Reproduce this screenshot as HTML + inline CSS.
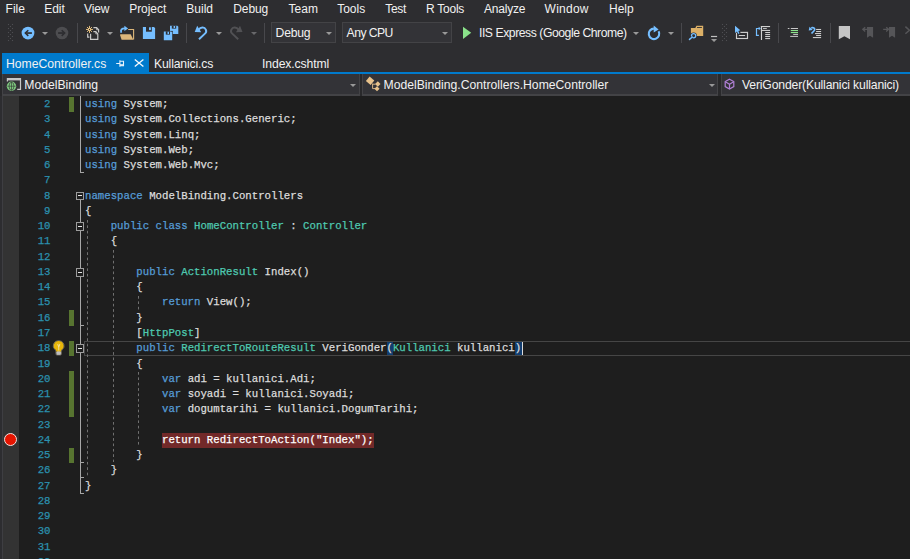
<!DOCTYPE html>
<html lang="en">
<head>
<meta charset="utf-8">
<title>ModelBinding - Microsoft Visual Studio</title>
<style>
*{box-sizing:border-box;margin:0;padding:0}
html,body{width:910px;height:559px;overflow:hidden;background:#2d2d30}
body{position:relative;font-family:"Liberation Sans",sans-serif;font-size:12px;color:#f1f1f1}
.abs{position:absolute}
/* menu */
#menu{position:absolute;left:0;top:0;width:910px;height:20px;background:#2d2d30}
#menu span{position:absolute;top:1px;line-height:16px;font-size:12px;color:#f1f1f1;white-space:nowrap}
/* toolbar */
#tb{position:absolute;left:0;top:20px;width:910px;height:28px;background:#2d2d30}
.sep{position:absolute;top:3px;width:1.2px;height:20px;background:#48484c}
.dd{position:absolute;width:0;height:0;border-left:3px solid transparent;border-right:3px solid transparent;border-top:3px solid #999}
.dd.dis{border-top-color:#68686b}
.combo{position:absolute;top:2px;height:21px;background:#333337;border:1px solid #434346}
.combo span{position:absolute;left:3.6px;top:3px;line-height:15px;font-size:12.2px;white-space:nowrap}
.tbt{position:absolute;font-size:12.2px;line-height:15px;white-space:nowrap}
.grip{position:absolute;width:5px;height:17px;background-image:radial-gradient(circle,#46464a 0.6px,transparent 0.8px);background-size:2.5px 2.5px}
svg{position:absolute;overflow:visible}
/* tabs */
#tabs{position:absolute;left:0;top:48px;width:910px;height:24px;background:#2d2d30}
#tabline{position:absolute;left:2px;top:72px;width:908px;height:2px;background:#007acc}
#tabact{position:absolute;left:2px;top:53px;width:147px;height:19px;background:#007acc}
.tab{position:absolute;top:56px;font-size:12.2px;line-height:16px;white-space:nowrap;color:#f1f1f1}
/* nav */
#nav{position:absolute;left:0;top:74px;width:910px;height:22px;background:#29292b}
.nc{position:absolute;top:0;height:21.7px;background:#333337;border:1.3px solid #434346;border-top:0;border-bottom-width:2px}
.nt{position:absolute;top:77px;font-size:12.2px;line-height:16px;white-space:nowrap;color:#f1f1f1}
/* editor */
#ed{position:absolute;left:0;top:96px;border-top:0;width:910px;height:463px;background:#1e1e1e;overflow:hidden}
#mg{position:absolute;left:0;top:0;width:18.5px;height:463px;background:#333333;border-left:2px solid #2d2d30}
#mg:after{content:"";position:absolute;left:0;top:0;width:1px;height:463px;background:#3e3e42}
.ln,.cl{position:absolute;margin-top:0.4px;-webkit-text-stroke:0.25px;font-family:"Liberation Mono",monospace;font-size:10.7px;line-height:15.26px;height:15.26px;white-space:pre;top:calc((var(--n) - 2) * 15.26px + 0.7px)}
.ln{left:20px;width:30.5px;text-align:right;color:#2b91af}
.cl{left:85px;color:#dcdcdc}
.k{color:#569cd6}.t{color:#4ec9b0}.s{color:#d69d85}
.gb{position:absolute;left:69px;width:4.6px;background:#577430;top:calc((var(--n) - 2) * 15.26px + 0.7px);height:calc(var(--c) * 15.26px)}
.vl{position:absolute;width:1.2px;background:#a8a8a8}
.ft{position:absolute;height:1px;width:4px;left:80px;background:#a5a5a5}
.ob{position:absolute;left:76px;width:8.1px;height:8.7px;border:1px solid #9c9c9c;background:#1e1e1e;top:calc((var(--n) - 2) * 15.26px + 0.7px + 3.3px)}
.ob:after{content:"";position:absolute;left:1px;top:2.8px;width:4.1px;height:1.1px;background:#e6e6e6}
.curl{position:absolute;left:84px;right:-2px;top:calc((var(--n) - 2) * 15.26px + 0.7px - 0.1px);height:15.2px;border:1.4px solid #464646}
.bp{color:#fff}
.hbx{position:absolute;background:#113d6f;width:6.42px;height:12.4px}
.bpx{position:absolute;background:#722929;left:162px;width:212.3px;height:15px}
.caret{position:absolute;width:1px;background:#dcdcdc;height:13px}
.bpg{position:absolute;left:4.1px;width:13.1px;height:13.1px;border-radius:50%;background:#e51400;border:1px solid #f5e1de}
.ig{position:absolute;width:1px;background-image:linear-gradient(#707070 52%,transparent 52%);background-size:1px 5.39px}
</style>
</head>
<body>
<div id="menu">
<span style="left:5.6px">File</span><span style="left:44.2px">Edit</span><span style="left:84px;letter-spacing:-0.15px">View</span><span style="left:129.2px;letter-spacing:-0.05px">Project</span><span style="left:186.3px">Build</span><span style="left:233.3px;letter-spacing:-0.1px">Debug</span><span style="left:288.6px">Team</span><span style="left:337.2px">Tools</span><span style="left:385.2px;letter-spacing:-0.3px">Test</span><span style="left:426px;letter-spacing:-0.25px">R Tools</span><span style="left:484px;letter-spacing:-0.2px">Analyze</span><span style="left:544.6px;letter-spacing:0.25px">Window</span><span style="left:609px">Help</span>
</div>
<div id="tb">
<div class="sep" style="left:77px"></div>
<div class="sep" style="left:186px"></div>
<div class="sep" style="left:264px"></div>
<div class="sep" style="left:681px"></div>
<div class="sep" style="left:778px"></div>
<div class="sep" style="left:830px"></div>
<div class="dd" style="left:42px;top:12px"></div>
<div class="dd" style="left:107px;top:12px"></div>
<div class="dd" style="left:216px;top:12px"></div>
<div class="dd dis" style="left:251px;top:12px"></div>
<div class="dd" style="left:633px;top:12px"></div>
<div class="dd" style="left:668px;top:12px"></div>
<div class="combo" style="left:271px;width:65px"><span style="letter-spacing:-0.25px">Debug</span></div>
<div class="dd" style="left:326px;top:12px"></div>
<div class="combo" style="left:342px;width:110px"><span style="letter-spacing:-0.55px">Any CPU</span></div>
<div class="dd" style="left:442px;top:12px"></div>
<div class="tbt" style="left:479px;top:6px;letter-spacing:-0.45px">IIS Express (Google Chrome)</div>
<svg style="left:0;top:0" width="910" height="28" viewBox="0 20 910 28">
<!-- grips -->
<g fill="#4e4e52"><rect x="7.95" y="23.95" width="1.1" height="1.1"/><rect x="11.95" y="23.95" width="1.1" height="1.1"/><rect x="9.90" y="25.95" width="1.1" height="1.1"/><rect x="7.95" y="27.95" width="1.1" height="1.1"/><rect x="11.95" y="27.95" width="1.1" height="1.1"/><rect x="9.90" y="29.95" width="1.1" height="1.1"/><rect x="7.95" y="31.95" width="1.1" height="1.1"/><rect x="11.95" y="31.95" width="1.1" height="1.1"/><rect x="9.90" y="33.95" width="1.1" height="1.1"/><rect x="7.95" y="35.95" width="1.1" height="1.1"/><rect x="11.95" y="35.95" width="1.1" height="1.1"/><rect x="9.90" y="37.95" width="1.1" height="1.1"/><rect x="7.95" y="39.95" width="1.1" height="1.1"/><rect x="11.95" y="39.95" width="1.1" height="1.1"/><rect x="721.95" y="23.95" width="1.1" height="1.1"/><rect x="725.95" y="23.95" width="1.1" height="1.1"/><rect x="723.90" y="25.95" width="1.1" height="1.1"/><rect x="721.95" y="27.95" width="1.1" height="1.1"/><rect x="725.95" y="27.95" width="1.1" height="1.1"/><rect x="723.90" y="29.95" width="1.1" height="1.1"/><rect x="721.95" y="31.95" width="1.1" height="1.1"/><rect x="725.95" y="31.95" width="1.1" height="1.1"/><rect x="723.90" y="33.95" width="1.1" height="1.1"/><rect x="721.95" y="35.95" width="1.1" height="1.1"/><rect x="725.95" y="35.95" width="1.1" height="1.1"/><rect x="723.90" y="37.95" width="1.1" height="1.1"/><rect x="721.95" y="39.95" width="1.1" height="1.1"/><rect x="725.95" y="39.95" width="1.1" height="1.1"/></g>
<!-- back -->
<circle cx="28" cy="33.050" r="6.400" fill="#75beff"/>
<path d="M31.900 33.050H26.200" stroke="#2d2d30" stroke-width="1.700" fill="none"/>
<path d="M28.300 30.200L25.300 33.050L28.300 35.900" stroke="#2d2d30" stroke-width="1.500" fill="none"/>
<!-- forward (disabled) -->
<circle cx="62" cy="33.050" r="6.300" fill="#4d4d50"/>
<path d="M58.100 33.050H63.800" stroke="#2d2d30" stroke-width="1.700" fill="none"/>
<path d="M61.700 30.200L64.700 33.050L61.700 35.900" stroke="#2d2d30" stroke-width="1.500" fill="none"/>
<!-- new project -->
<g fill="none" stroke="#c8c8c8" stroke-width="1.2">
<path d="M93.4 27.7H96.6L98.6 29.8V32.6"/>
<path d="M87.7 33.4V37.2H89.4"/>
<path d="M93.4 31.7H95.8L97.8 33.9V39.3H90.6V33.8"/>
</g>
<path d="M95.8 31.7V33.9H97.8M96.6 27.7V29.8H98.6" fill="none" stroke="#c8c8c8" stroke-width="0.8"/>
<g stroke="#f5cc84" stroke-width="0.9">
<path d="M89.5 25.9V33M86 29.45H93M87 27L92 31.9M92 27L87 31.9"/>
</g>
<circle cx="89.5" cy="29.45" r="1.5" fill="#f5cc84"/>
<circle cx="89.5" cy="29.45" r="0.7" fill="#2d2d30"/>
<!-- open folder -->
<path d="M128.2 29.5H133.6V39.6" fill="none" stroke="#dcb67a" stroke-width="1.1"/>
<path d="M120.2 34.3H130.6L133.4 39.7H121.6L120.2 35.6Z" fill="#dcb67a"/>
<path d="M121.3 32.8C120.2 29.8 121.8 28.3 125 28.4" fill="none" stroke="#75beff" stroke-width="1.8"/>
<path d="M124.4 25.7L128.1 28.4L124.4 31.1Z" fill="#75beff"/>
<!-- save -->
<path d="M142.900 26.900H153.900L155.100 28.100V39.100H142.900Z" fill="#75beff"/>
<rect x="146" y="26.700" width="5.800" height="5" fill="#2d2d30"/>
<rect x="149" y="27.300" width="1.900" height="2.800" fill="#75beff"/>
<!-- save all -->
<path d="M170 25.800H177.400L178.300 26.700V34H170Z" fill="#75beff"/>
<rect x="171.800" y="25.600" width="4.400" height="3" fill="#2d2d30"/>
<rect x="173.600" y="26" width="1.500" height="2" fill="#75beff"/>
<path d="M163.200 30.900H172.800V40.600H163.200Z" fill="#2d2d30"/>
<path d="M163.800 31.500H171.300L172.200 32.400V40.200H163.800Z" fill="#75beff"/>
<rect x="165.800" y="31.300" width="4.200" height="3.300" fill="#2d2d30"/>
<rect x="167.500" y="31.800" width="1.500" height="2.200" fill="#75beff"/>
<!-- undo -->
<path d="M199 39.2L205.2 33.4C207.4 31.2 205.6 27.4 202.4 27.6C200.6 27.7 199.4 28.6 198.4 29.8" fill="none" stroke="#75beff" stroke-width="2"/>
<path d="M194.7 32L197.2 25.8L201.2 32.2Z" fill="#75beff"/>
<!-- redo disabled -->
<path d="M238.2 39.2L232 33.4C229.8 31.2 231.6 27.4 234.8 27.6C236.6 27.7 237.8 28.6 238.8 29.8" fill="none" stroke="#515154" stroke-width="2"/>
<path d="M242.5 32L240 25.8L236 32.2Z" fill="#515154"/>
<!-- play -->
<path d="M463 26.7L471.2 32.8L463 38.9Z" fill="#8ae28a"/>
<!-- refresh -->
<path d="M658.600 31.300A5.250 5.250 0 1 1 653.900 28.600" fill="none" stroke="#75beff" stroke-width="2.100"/>
<path d="M653.700 25.500L658.600 29.400L653.700 32.400Z" fill="#75beff"/>
<!-- find in files -->
<path d="M690.900 28.100H695.300L696.500 25.800H703.200V35.900H690.900Z" fill="#dcb067"/>
<path d="M697 27.500H701.900" stroke="#2d2d30" stroke-width="0.900"/>
<circle cx="693.600" cy="35.700" r="3.300" fill="#2d2d30"/>
<circle cx="693.600" cy="35.700" r="2.100" fill="#2d2d30" stroke="#75beff" stroke-width="1.300"/>
<path d="M692 37.300L689.300 39.600" stroke="#2d2d30" stroke-width="2.600"/>
<path d="M692 37.300L689.500 39.400" stroke="#75beff" stroke-width="1.500" stroke-linecap="round"/>
<!-- overflow -->
<rect x="711" y="35.900" width="6.100" height="1.200" fill="#c0c0c0"/>
<path d="M711 39.100H717.100L714.050 42.100Z" fill="#999"/>
<!-- cursor + rect -->
<rect x="736.500" y="32.400" width="11" height="6.100" fill="none" stroke="#cfcfcf" stroke-width="1.150"/>
<rect x="738.800" y="35" width="6.300" height="1.050" fill="#cfcfcf"/>
<path d="M734.300 24.600V34.200L736.900 32.400L738.300 35L741 33.400L739.800 31.400L741.600 30.600Z" fill="#2d2d30"/>
<path d="M735 25.800V33L736.900 31.500L738.300 33.900L739.500 33.200L738.300 31L740.300 30.300Z" fill="#75beff"/>
<!-- bracket list -->
<path d="M759.600 28.500H756.500V35.400H758.900" fill="none" stroke="#75beff" stroke-width="1.200"/>
<path d="M758.700 26.800L760.900 28.500L758.700 30.200Z" fill="#75beff"/>
<g fill="#d0d0d0">
<rect x="760.900" y="26" width="1.150" height="14"/>
<rect x="760.900" y="26" width="9.200" height="1.100"/>
<rect x="763" y="28" width="3.800" height="1" fill="#b8b8b8"/>
<rect x="760.900" y="29.900" width="9.200" height="1.050"/>
<rect x="765.200" y="32" width="4.900" height="1.050"/>
<rect x="765.200" y="34.050" width="4.900" height="1.050"/>
<rect x="765.200" y="36" width="4.900" height="1.050"/>
<rect x="765.200" y="38.050" width="4.900" height="1.050"/>
</g>
<!-- comment lines -->
<g fill="#c8c8c8">
<rect x="787.8" y="28" width="1.6" height="1"/>
<rect x="790.8" y="28" width="7.2" height="1"/>
<rect x="793.2" y="33.9" width="4.8" height="1"/>
<rect x="790.2" y="35.9" width="7.8" height="1"/>
</g>
<rect x="790.8" y="30" width="7.2" height="1.1" fill="#8ae28a"/>
<rect x="790.8" y="32" width="7.2" height="1.1" fill="#8ae28a"/>
<!-- uncomment -->
<path d="M811.500 33.500L813.900 31C815.500 29.400 814.500 27.500 812.500 27.600L811.200 27.800" fill="none" stroke="#75beff" stroke-width="1.700"/>
<path d="M808.700 30.400L809.500 26.700L812.700 29.900Z" fill="#75beff"/>
<g fill="#d0d0d0">
<rect x="816.100" y="28.950" width="5" height="1.050"/>
<rect x="816.100" y="31" width="5" height="1.050"/>
<rect x="815" y="33.050" width="6.100" height="1.050"/>
<rect x="816.100" y="35" width="5" height="1.050"/>
<rect x="812.900" y="37.050" width="8.200" height="1.050"/>
</g>
<!-- bookmark -->
<path d="M838.8 26.1H850V39.2L844.4 36.2L838.8 39.2Z" fill="#c5c5c5"/>
<!-- prev bookmark -->
<path d="M867 27H873.1V37.8L870 35.8L867 37.8Z" fill="#555558"/>
<path d="M868 29.3H863M865.2 27.2L862.8 29.3L865.2 31.4" fill="none" stroke="#555558" stroke-width="1.3"/>
<!-- next bookmark -->
<path d="M889 27H895.1V37.8L892 35.8L889 37.8Z" fill="#555558"/>
<path d="M883.2 29.3H888.4M886.2 27.2L888.6 29.3L886.2 31.4" fill="none" stroke="#555558" stroke-width="1.3"/>
<path d="M905.4 26.6L909.4 30.2L905.4 33.8" fill="none" stroke="#555558" stroke-width="1.5"/>
</svg>

</div>
<div id="tabs"></div>
<div id="tabact"></div>
<div id="tabline"></div>
<div class="tab" style="left:6px">HomeController.cs</div>
<div class="tab" style="left:154px;letter-spacing:-0.15px">Kullanici.cs</div>
<div class="tab" style="left:262px;letter-spacing:-0.1px">Index.cshtml</div>
<svg style="left:0;top:48px" width="910" height="26" viewBox="0 48 910 26">
<g stroke="#e8f2fb" fill="none" stroke-width="1.1">
<path d="M116.2 63.5H119.8M119.9 60.2V66.8M120 61.3H123.5V65.7H120"/>
<path d="M120 65H123.5" stroke-width="1.6"/>
</g>
<path d="M134.8 59.6L143.4 66.6M143.4 59.6L134.8 66.6" stroke="#f4f9fd" stroke-width="1.35" fill="none"/>
</svg>

<div id="nav">
<div class="nc" style="left:2px;width:357.5px"></div>
<div class="nc" style="left:362px;width:356px"></div>
<div class="nc" style="left:721px;width:189px;border-right:0"></div>
<div class="dd" style="left:350px;top:10.2px"></div>
<div class="dd" style="left:709px;top:10.2px"></div>
</div>
<div class="nt" style="left:24.3px">ModelBinding</div>
<div class="nt" style="left:383.5px">ModelBinding.Controllers.HomeController</div>
<div class="nt" style="left:742px;letter-spacing:-0.16px">VeriGonder(Kullanici kullanici)</div>
<svg style="left:0;top:74px" width="910" height="22" viewBox="0 74 910 22">
<!-- web project -->
<path d="M7.4 81.4V78.6H20.5V89.4H17.2" fill="none" stroke="#c8c8c8" stroke-width="1.2"/>
<rect x="7" y="78" width="14" height="2.4" fill="#c8c8c8"/>
<circle cx="11.5" cy="86.2" r="4.7" fill="#7ec87e"/>
<g stroke="#2d2d30" stroke-width="0.6" fill="none">
<path d="M11.5 82V90.4M7.4 86.2H15.6"/>
<ellipse cx="11.5" cy="86.2" rx="2.4" ry="4"/>
</g>
<!-- class icon -->
<g fill="#e8c28b">
<path d="M369.600 76.600L374.300 80.600L370.600 85L365.900 81Z"/>
<path d="M377.800 81.200L380.500 84L377.800 86.800L375.100 84Z"/>
<path d="M377 86.200L379.600 88.700L377 91.200L374.400 88.700Z"/>
</g>
<path d="M372.600 83.600V88.600H375M372.600 84.200H375.600" fill="none" stroke="#e8c28b" stroke-width="0.9"/>
<!-- method cube -->
<g fill="none" stroke="#b180d7" stroke-width="1.2">
<path d="M729.5 79.2L733.8 81.6V86.6L729.5 89L725.2 86.6V81.6Z"/>
<path d="M725.4 81.8L729.5 84.2L733.6 81.8M729.5 84.2V88.8"/>
</g>
</svg>

<div id="ed">
<div id="mg"></div>
<div class="curl" style="--n:18"></div>
<div class="hbx" style="left:386.7px;top:246.26px"></div>
<div class="hbx" style="left:515.1px;top:246.26px"></div>
<div class="caret" style="left:522px;top:246.06px"></div>
<div class="bpx" style="top:336.82px"></div>
<div class="ln" style="--n:2">2</div>
<div class="cl" style="--n:2"><span class="k">using</span> System;</div>
<div class="ln" style="--n:3">3</div>
<div class="cl" style="--n:3"><span class="k">using</span> System.Collections.Generic;</div>
<div class="ln" style="--n:4">4</div>
<div class="cl" style="--n:4"><span class="k">using</span> System.Linq;</div>
<div class="ln" style="--n:5">5</div>
<div class="cl" style="--n:5"><span class="k">using</span> System.Web;</div>
<div class="ln" style="--n:6">6</div>
<div class="cl" style="--n:6"><span class="k">using</span> System.Web.Mvc;</div>
<div class="ln" style="--n:7">7</div>
<div class="ln" style="--n:8">8</div>
<div class="cl" style="--n:8"><span class="k">namespace</span> ModelBinding.Controllers</div>
<div class="ln" style="--n:9">9</div>
<div class="cl" style="--n:9">{</div>
<div class="ln" style="--n:10">10</div>
<div class="cl" style="--n:10">    <span class="k">public</span> <span class="k">class</span> <span class="t">HomeController</span> : <span class="t">Controller</span></div>
<div class="ln" style="--n:11">11</div>
<div class="cl" style="--n:11">    {</div>
<div class="ln" style="--n:12">12</div>
<div class="ln" style="--n:13">13</div>
<div class="cl" style="--n:13">        <span class="k">public</span> <span class="t">ActionResult</span> Index()</div>
<div class="ln" style="--n:14">14</div>
<div class="cl" style="--n:14">        {</div>
<div class="ln" style="--n:15">15</div>
<div class="cl" style="--n:15">            <span class="k">return</span> View();</div>
<div class="ln" style="--n:16">16</div>
<div class="cl" style="--n:16">        }</div>
<div class="ln" style="--n:17">17</div>
<div class="cl" style="--n:17">        [<span class="t">HttpPost</span>]</div>
<div class="ln" style="--n:18">18</div>
<div class="cl" style="--n:18">        <span class="k">public</span> <span class="t">RedirectToRouteResult</span> VeriGonder<span class="hb">(</span><span class="t">Kullanici</span> kullanici<span class="hb">)</span></div>
<div class="ln" style="--n:19">19</div>
<div class="cl" style="--n:19">        {</div>
<div class="ln" style="--n:20">20</div>
<div class="cl" style="--n:20">            <span class="k">var</span> adi = kullanici.Adi;</div>
<div class="ln" style="--n:21">21</div>
<div class="cl" style="--n:21">            <span class="k">var</span> soyadi = kullanici.Soyadi;</div>
<div class="ln" style="--n:22">22</div>
<div class="cl" style="--n:22">            <span class="k">var</span> dogumtarihi = kullanici.DogumTarihi;</div>
<div class="ln" style="--n:23">23</div>
<div class="ln" style="--n:24">24</div>
<div class="cl" style="--n:24">            <span class="bp">return RedirectToAction("Index");</span></div>
<div class="ln" style="--n:25">25</div>
<div class="cl" style="--n:25">        }</div>
<div class="ln" style="--n:26">26</div>
<div class="cl" style="--n:26">    }</div>
<div class="ln" style="--n:27">27</div>
<div class="cl" style="--n:27">}</div>
<div class="ln" style="--n:28">28</div>
<div class="ln" style="--n:29">29</div>
<div class="ln" style="--n:30">30</div>
<div class="ln" style="--n:31">31</div>
<div class="ln" style="--n:32">32</div>
<div class="gb" style="--n:2;--c:1"></div>
<div class="gb" style="--n:16;--c:1"></div>
<div class="gb" style="--n:18;--c:1"></div>
<div class="gb" style="--n:20;--c:3"></div>
<div class="gb" style="--n:25;--c:1"></div>
<div class="vl" style="left:79.9px;top:0;height:76.80px"></div>
<div class="ft" style="top:76.10px"></div>
<div class="vl" style="left:79.9px;top:100.26px;height:297.00px"></div>
<div class="ft" style="top:228.70px"></div>
<div class="ft" style="top:366.04px"></div>
<div class="ft" style="top:381.30px"></div>
<div class="ft" style="top:396.56px"></div>
<div class="ob" style="--n:8"></div>
<div class="ob" style="--n:10"></div>
<div class="ob" style="--n:13"></div>
<div class="ob" style="--n:18"></div>
<div class="ig" style="left:87px;top:123.58px;height:257.82px"></div>
<div class="ig" style="left:113px;top:154.10px;height:212.04px"></div>
<div class="ig" style="left:138px;top:199.88px;height:13.66px"></div>
<div class="ig" style="left:138px;top:276.18px;height:74.70px"></div>
<div class="bpg" style="top:337.02px"></div>
<svg style="left:0;top:0" width="100" height="463" viewBox="0 96 100 463">
<path d="M58.65 340.6a5.4 5.2 0 0 1 3.5 9.2c-.6.7-.8 1.2-.8 2v2.2a1 1 0 0 1-1 1h-3.4a1 1 0 0 1-1-1v-2.2c0-.8-.2-1.3-.8-2a5.4 5.2 0 0 1 3.5-9.2z" fill="#1e1e1e" stroke="#7a7466" stroke-width="0.9"/>
<path d="M58.65 341a5 4.9 0 0 1 3.2 8.6c-.7.7-.9 1.3-.9 2.1h-4.6c0-.8-.2-1.400-.9-2.100a5 4.900 0 0 1 3.200-8.600z" fill="#e8b60c"/>
<rect x="56.5" y="351.500" width="4.400" height="3.200" rx="0.800" fill="#dcdcdc"/>
<path d="M56.600 352.700h4.200M56.600 353.800h4.200" stroke="#8a8a8a" stroke-width="0.450"/>
<path d="M57.200 344.300l1.100 3v3.200h.9v-3.200l1.100-3-.9-.3-.65 1.800-.65-1.800z" fill="#f3dfa0"/>
</svg>

</div>
</body>
</html>
